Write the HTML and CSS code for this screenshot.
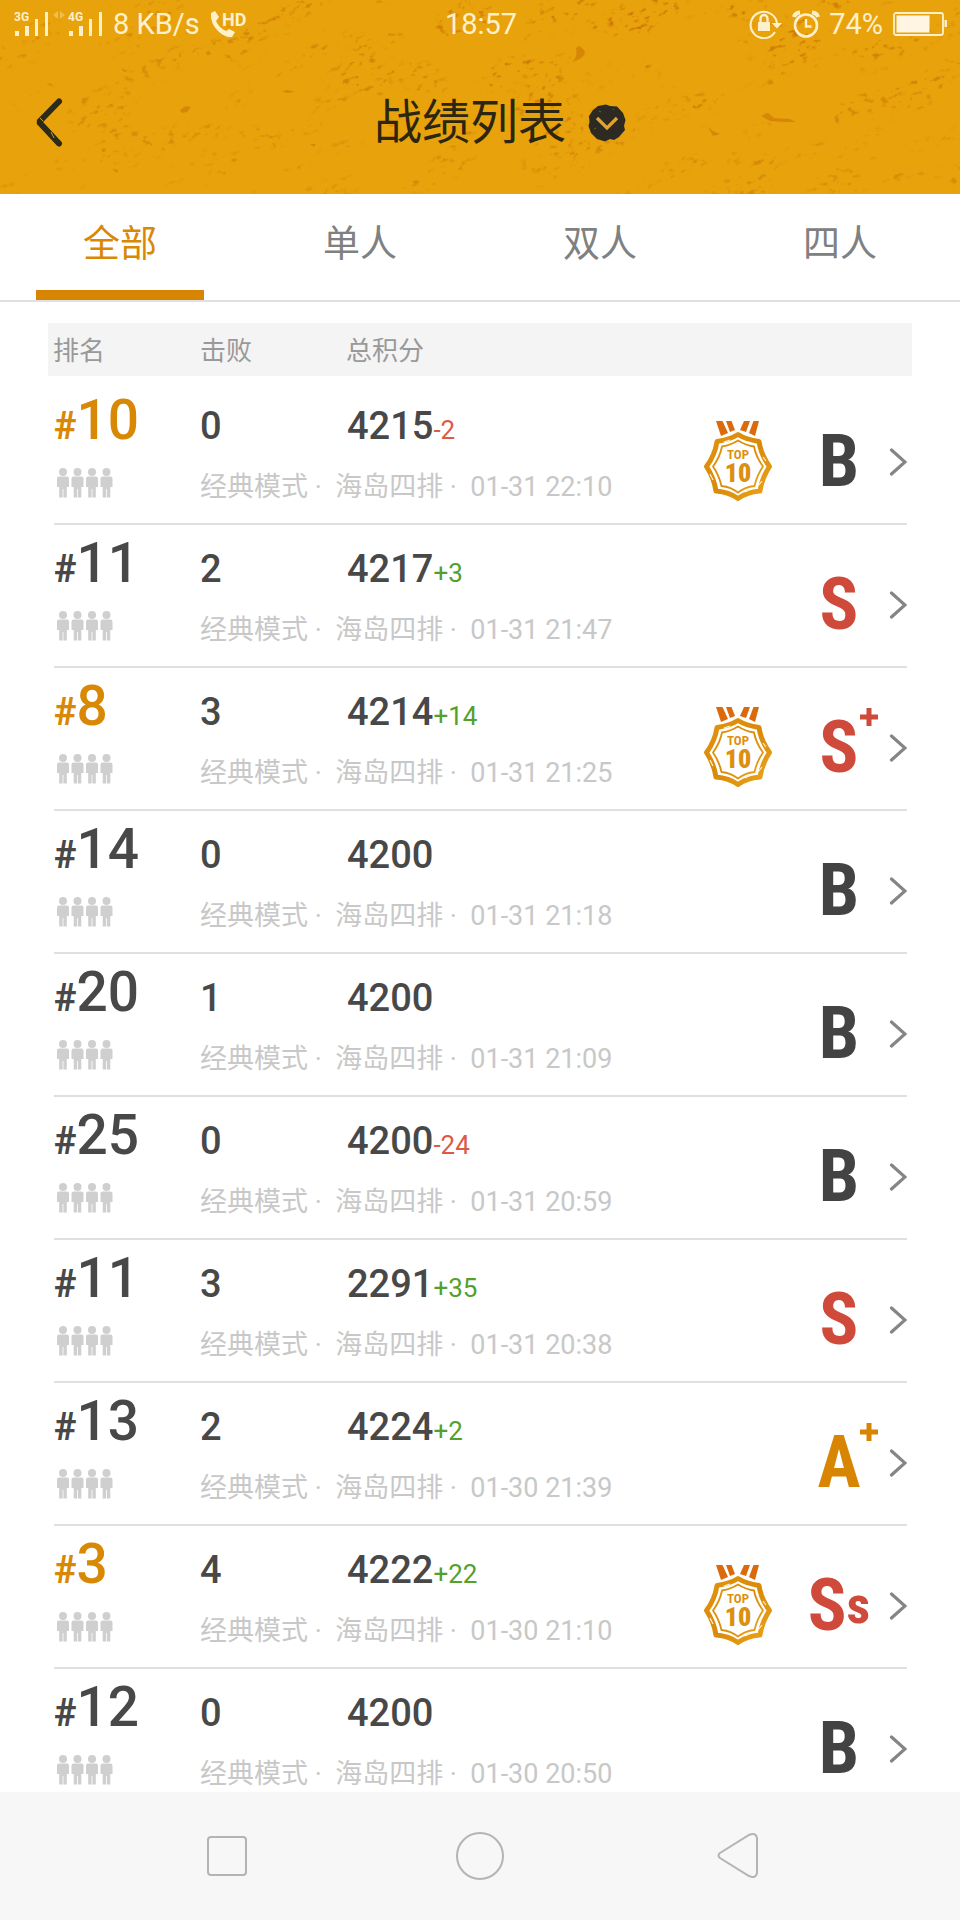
FILE: index.html
```html
<!DOCTYPE html>
<html lang="zh-CN">
<head>
<meta charset="utf-8">
<meta name="viewport" content="width=device-width, initial-scale=1">
<title>战绩列表</title>
<link rel="stylesheet" href="styles.css">
</head>
<body>
<svg class="defs" aria-hidden="true">
  <defs>
    <symbol id="squad" viewBox="0 0 56 30">
      <g id="person" fill="#cfcfcf"><circle cx="6" cy="4" r="4"/><path d="M2 8.500H10Q12 8.500 12 10.500V19H9.800V29.500H6.400V21H5.600V29.500H2.200V19H0V10.500Q0 8.500 2 8.500Z"/></g>
      <use href="#person" x="14.500"/><use href="#person" x="29"/><use href="#person" x="43.500"/>
    </symbol>
    <symbol id="next" viewBox="0 0 18 30"><path d="M2.500 3L16 15L2.500 27" fill="none" stroke="#858585" stroke-width="3.200" stroke-linecap="round"/></symbol>
    <linearGradient id="gold" x1="0" y1="0" x2="1" y2="1"><stop offset="0" stop-color="#e2940f"/><stop offset=".5" stop-color="#d98a08"/><stop offset="1" stop-color="#eba51d"/></linearGradient>
    <symbol id="medal" viewBox="0 0 70 82">
      <g fill="#db6a0c"><path d="M13 0H19.500L25 12L18 15Z"/><path d="M23 0H28.500L32 9L27 11Z"/><path d="M41 0H47L43 11L37 9Z"/><path d="M50.500 0H56L52 15L46 12Z"/></g>
      <path d="M35 13.500Q43 18.500 56 20.500Q58 34 66.500 45.500Q59 57 57 70Q44 71 35 77.500Q26 71 13 70Q11 57 3.500 45.500Q12 34 14 20.500Q27 18.500 35 13.500Z" fill="none" stroke="url(#gold)" stroke-width="5" stroke-linejoin="round"/>
      <path d="M35 19.500Q42 24 51 25.500Q53 36 60 45.500Q54 54 51.500 65Q42 66 35 71.500Q28 66 18.500 65Q16 54 10 45.500Q17 36 19 25.500Q28 24 35 19.500Z" fill="none" stroke="url(#gold)" stroke-width="1.800" stroke-linejoin="round"/>
      <path d="M7 53L10 59M59 60L55 65M21 21L27 19M60 36L63 40M42 71L46 69" stroke="#fff2cf" stroke-width="1.200"/>
      <text class="medal-top" x="35" y="38" text-anchor="middle">TOP</text>
      <text class="medal-ten" x="35" y="61" text-anchor="middle">10</text>
    </symbol>
    <symbol id="plus" viewBox="0 0 20 20"><path d="M7.500 1H12.500V7.500H19V12.500H12.500V19H7.500V12.500H1V7.500H7.500Z" fill="currentColor"/></symbol>
    <filter id="grain" x="0" y="0" width="1" height="1" color-interpolation-filters="sRGB">
      <feTurbulence type="fractalNoise" baseFrequency=".12 .2" numOctaves="4" seed="8" result="fine"/>
      <feColorMatrix in="fine" values="0 0 0 0 .8  0 0 0 0 .46  0 0 0 0 .02  8 0 0 0 -4.900" result="specks"/>
      <feTurbulence type="fractalNoise" baseFrequency=".012 .03" numOctaves="3" seed="4"/>
      <feColorMatrix values="0 0 0 0 0  0 0 0 0 0  0 0 0 0 0  0 8 0 0 -4" result="patches"/>
      <feComposite in="specks" in2="patches" operator="in"/>
    </filter>
    <radialGradient id="worn" cx=".68" cy=".15" r=".6"><stop offset="0" stop-color="#fff"/><stop offset=".4" stop-color="#ccc"/><stop offset="1" stop-color="#888"/></radialGradient>
    <mask id="wear"><rect width="960" height="200" fill="url(#worn)"/></mask>
  </defs>
</svg>

<header class="hero">
  <svg class="texture" viewBox="0 0 960 194" preserveAspectRatio="xMidYMid slice" aria-hidden="true">
    <g mask="url(#wear)"><rect x="-100" y="-400" width="1300" height="1000" transform="rotate(-22 480 97)" filter="url(#grain)"/></g>
    <g fill="#d07c06" opacity=".7"><path d="M180 110L186 106L191 107L187 112L182 113ZM282 91L288 90L295 92L287 93ZM112 169L118 170L117 173ZM572 62Q578 57 576 48Q580 43 585 52Q585 58 572 62ZM310 144L316 144L314 147ZM121 68L127 71L124 72ZM708 127L713 131L720 134L713 136ZM761 116L768 113L774 118L790 119L796 122L785 122L770 121Z"/></g>
  </svg>
  <div class="status">
    <div class="status-side">
      <svg width="90" height="30" viewBox="0 0 90 30" fill="#fff0cc" aria-label="3G 4G">
        <text class="net" x="0" y="12">3G</text><path d="M1 22H5V27H1ZM11 17H15V27H11ZM21 10H24V27H21ZM31 3H34V27H31Z"/>
        <path opacity=".35" d="M44 2V10L39 6ZM46 2V10L51 6Z"/>
        <text class="net" x="54" y="12">4G</text><path d="M55 22H59V27H55ZM65 17H69V27H65ZM75 10H78V27H75ZM85 3H88V27H85Z"/>
      </svg>
      <span>8 KB/s</span>
      <svg width="38" height="30" viewBox="0 0 38 30" fill="#fff0cc" aria-label="HD">
        <path d="M2 4L6 2L10 8L7 12Q10 19 17 22L20 20L26 23L23 28Q16 29 9 22Q1 14 2 4Z"/>
        <text class="hd" x="13" y="17">HD</text>
      </svg>
    </div>
    <time>18:57</time>
    <div class="status-side status-right">
      <svg width="34" height="30" viewBox="0 0 34 30" aria-hidden="true">
        <path d="M26 23A13.200 13.200 0 1 1 28 15" fill="none" stroke="#fff0cc" stroke-width="2"/><path d="M22.500 14H33L28 19.500Z" fill="#fff0cc"/>
        <path d="M9 13H21V22H9Z" fill="#fff0cc"/><path d="M11.500 13V9.500A3.500 3.500 0 0 1 18.500 9.500V13" fill="none" stroke="#fff0cc" stroke-width="2.400"/>
      </svg>
      <svg width="28" height="30" viewBox="0 0 28 30" fill="none" stroke="#fff0cc" aria-hidden="true">
        <circle cx="14" cy="16.500" r="11" stroke-width="2.600"/><path d="M14 10V17.500H19.500" stroke-width="2.400"/><path d="M2 8Q3 4 8 3.500M26 8Q25 4 20 3.500" stroke-width="4"/>
      </svg>
      <span>74%</span>
      <svg width="56" height="30" viewBox="0 0 56 30" aria-hidden="true">
        <rect x="2" y="4" width="49" height="22" rx="2" fill="none" stroke="#fff0cc" stroke-width="1.800"/><rect x="4.500" y="6.500" width="33" height="17" fill="#fff5e2"/><rect x="52.500" y="11" width="2.500" height="7" fill="#fff0cc"/>
      </svg>
    </div>
  </div>
  <div class="titlebar">
    <button class="back" aria-label="返回">
      <svg width="30" height="50" viewBox="0 0 30 50"><path d="M25 3.500L5 24L25 45.500" fill="none" stroke="#2c2a1b" stroke-width="6" stroke-linecap="round" stroke-linejoin="bevel"/><path d="M6 20L9 23M17 34L20 40" stroke="#d89a18"/></svg>
    </button>
    <h1>战绩列表</h1>
    <button class="filter" aria-label="筛选">
      <svg width="38" height="38" viewBox="0 0 38 38"><path d="M10 2L18 .500L22 2L29 2.500L35 9L37.500 16L36 22L37 26L31 33L26 36L22 35L17 37.500L9 35L3 29L.500 22L1.500 18L1 12L5 6Z" fill="#2c2a22"/><path d="M9 14L19 24L29 14" fill="none" stroke="#e2a42c" stroke-width="3.200"/><path d="M11 7L13 8M6 25L8 24M25 6L26 5" stroke="#85601a"/></svg>
    </button>
  </div>
</header>

<nav class="tabs">
  <button class="tab active">全部</button>
  <button class="tab">单人</button>
  <button class="tab">双人</button>
  <button class="tab">四人</button>
</nav>

<main class="content">
  <table class="records">
    <thead><tr><th>排名</th><th>击败</th><th>总积分</th></tr></thead>
    <tbody>
      <tr>
        <td class="rank top"><small>#</small>10</td><td class="kills">0</td><td class="score">4215<span class="loss">-2</span></td>
        <td class="team"><svg><use href="#squad"/></svg></td><td class="meta">经典模式 ·&nbsp; 海岛四排 ·&nbsp; 01-31 22:10</td>
        <td class="award"><svg><use href="#medal"/></svg></td><td class="grade b"><b>B</b></td>
        <td class="more"><a href="#" aria-label="详情"><svg><use href="#next"/></svg></a></td>
      </tr>
      <tr>
        <td class="rank"><small>#</small>11</td><td class="kills">2</td><td class="score">4217<span class="gain">+3</span></td>
        <td class="team"><svg><use href="#squad"/></svg></td><td class="meta">经典模式 ·&nbsp; 海岛四排 ·&nbsp; 01-31 21:47</td>
        <td class="award"></td><td class="grade s"><b>S</b></td>
        <td class="more"><a href="#" aria-label="详情"><svg><use href="#next"/></svg></a></td>
      </tr>
      <tr>
        <td class="rank top"><small>#</small>8</td><td class="kills">3</td><td class="score">4214<span class="gain">+14</span></td>
        <td class="team"><svg><use href="#squad"/></svg></td><td class="meta">经典模式 ·&nbsp; 海岛四排 ·&nbsp; 01-31 21:25</td>
        <td class="award"><svg><use href="#medal"/></svg></td><td class="grade s"><b>S</b><svg class="plus"><use href="#plus"/></svg></td>
        <td class="more"><a href="#" aria-label="详情"><svg><use href="#next"/></svg></a></td>
      </tr>
      <tr>
        <td class="rank"><small>#</small>14</td><td class="kills">0</td><td class="score">4200</td>
        <td class="team"><svg><use href="#squad"/></svg></td><td class="meta">经典模式 ·&nbsp; 海岛四排 ·&nbsp; 01-31 21:18</td>
        <td class="award"></td><td class="grade b"><b>B</b></td>
        <td class="more"><a href="#" aria-label="详情"><svg><use href="#next"/></svg></a></td>
      </tr>
      <tr>
        <td class="rank"><small>#</small>20</td><td class="kills">1</td><td class="score">4200</td>
        <td class="team"><svg><use href="#squad"/></svg></td><td class="meta">经典模式 ·&nbsp; 海岛四排 ·&nbsp; 01-31 21:09</td>
        <td class="award"></td><td class="grade b"><b>B</b></td>
        <td class="more"><a href="#" aria-label="详情"><svg><use href="#next"/></svg></a></td>
      </tr>
      <tr>
        <td class="rank"><small>#</small>25</td><td class="kills">0</td><td class="score">4200<span class="loss">-24</span></td>
        <td class="team"><svg><use href="#squad"/></svg></td><td class="meta">经典模式 ·&nbsp; 海岛四排 ·&nbsp; 01-31 20:59</td>
        <td class="award"></td><td class="grade b"><b>B</b></td>
        <td class="more"><a href="#" aria-label="详情"><svg><use href="#next"/></svg></a></td>
      </tr>
      <tr>
        <td class="rank"><small>#</small>11</td><td class="kills">3</td><td class="score">2291<span class="gain">+35</span></td>
        <td class="team"><svg><use href="#squad"/></svg></td><td class="meta">经典模式 ·&nbsp; 海岛四排 ·&nbsp; 01-31 20:38</td>
        <td class="award"></td><td class="grade s"><b>S</b></td>
        <td class="more"><a href="#" aria-label="详情"><svg><use href="#next"/></svg></a></td>
      </tr>
      <tr>
        <td class="rank"><small>#</small>13</td><td class="kills">2</td><td class="score">4224<span class="gain">+2</span></td>
        <td class="team"><svg><use href="#squad"/></svg></td><td class="meta">经典模式 ·&nbsp; 海岛四排 ·&nbsp; 01-30 21:39</td>
        <td class="award"></td><td class="grade a"><b>A</b><svg class="plus"><use href="#plus"/></svg></td>
        <td class="more"><a href="#" aria-label="详情"><svg><use href="#next"/></svg></a></td>
      </tr>
      <tr>
        <td class="rank top"><small>#</small>3</td><td class="kills">4</td><td class="score">4222<span class="gain">+22</span></td>
        <td class="team"><svg><use href="#squad"/></svg></td><td class="meta">经典模式 ·&nbsp; 海岛四排 ·&nbsp; 01-30 21:10</td>
        <td class="award"><svg><use href="#medal"/></svg></td><td class="grade s"><b>S</b><b class="minor">s</b></td>
        <td class="more"><a href="#" aria-label="详情"><svg><use href="#next"/></svg></a></td>
      </tr>
      <tr>
        <td class="rank"><small>#</small>12</td><td class="kills">0</td><td class="score">4200</td>
        <td class="team"><svg><use href="#squad"/></svg></td><td class="meta">经典模式 ·&nbsp; 海岛四排 ·&nbsp; 01-30 20:50</td>
        <td class="award"></td><td class="grade b"><b>B</b></td>
        <td class="more"><a href="#" aria-label="详情"><svg><use href="#next"/></svg></a></td>
      </tr>
    </tbody>
  </table>
</main>

<footer class="system">
  <button aria-label="最近任务"><svg width="48" height="48" viewBox="0 0 48 48"><rect x="7" y="5" width="38" height="38" rx="3"/></svg></button>
  <button aria-label="主屏幕"><svg width="48" height="48" viewBox="0 0 48 48"><circle cx="24" cy="24" r="23"/></svg></button>
  <button aria-label="返回"><svg width="48" height="48" viewBox="0 0 48 48"><path d="M9 21L38 3Q45 0 46 6V41Q45 47 38 44L9 26Q6 23.500 9 21Z"/></svg></button>
</footer>
</body>
</html>
```
FILE: styles.css
```css
* { box-sizing: border-box; }
body {
  margin: 0;
  height: 100vh;
  display: flex;
  flex-direction: column;
  background: #fff;
  color: #484848;
  font-family: Roboto, "Noto Sans CJK SC", sans-serif;
}
button { padding: 0; border: 0; background: none; font: inherit; color: inherit; }
svg { display: block; flex: none; }
.defs { position: absolute; width: 0; height: 0; }

.hero {
  position: relative;
  flex: none;
  background: #e8a20b;
  overflow: hidden;
}
.texture { position: absolute; inset: 0; width: 100%; height: 100%; }
.status {
  position: relative;
  display: grid;
  grid-template-columns: 1fr auto 1fr;
  align-items: center;
  padding: 0 12px 0 14px;
  color: #fff0cc;
  font-size: 29px;
  line-height: 48px;
}
.status-side { display: flex; align-items: center; gap: 9px; }
.status-right { justify-content: flex-end; }
.net { font: 700 12px Roboto, sans-serif; }
.hd { font: 700 18px Roboto, sans-serif; }
.titlebar {
  position: relative;
  display: grid;
  grid-template-columns: 1fr auto 1fr;
  align-items: center;
  padding: 42px 20px 38px 0;
  color: #2c2611;
}
.back { justify-self: start; padding-left: 34px; }
h1 { margin: 0; font-size: 48px; line-height: 66px; font-weight: 400; }
.filter { justify-self: start; margin-left: 22px; }

.tabs {
  flex: none;
  display: grid;
  grid-template-columns: repeat(4, 1fr);
  height: 108px;
  border-bottom: 2px solid #e0e0e0;
}
.tab {
  position: relative;
  padding-bottom: 4px;
  color: #808080;
  font-size: 37px;
  line-height: 48px;
}
.active { color: #d98806; }
.active::after {
  content: "";
  position: absolute;
  left: 15%;
  right: 15%;
  bottom: 0;
  height: 10px;
  background: #d88503;
}

.content {
  flex: 1;
  min-height: 0;
  padding: 21px 48px 0;
  overflow-y: auto;
  scrollbar-width: none;
}
.records, tbody, thead { display: block; }
th, td { padding: 0; text-align: left; }
thead tr {
  display: grid;
  grid-template-columns: 147px 146px 1fr;
  padding: 3px 5px 0;
  background: #f4f4f4;
}
th { color: #999; font-size: 26px; line-height: 50px; font-weight: 400; }
tbody { padding: 6px 5px 0 6px; }
tbody tr {
  display: grid;
  grid-template-columns: 146px 147px 1fr 70px 100px 34px;
  grid-template-rows: 64px 38px;
  row-gap: 16px;
  padding: 6px 0 17px;
  border-bottom: 2px solid #e0e0e0;
}
.rank, .kills, .score { grid-row: 1; align-self: baseline; font-size: 38px; font-weight: 500; line-height: 64px; }
.rank { font-size: 55px; }
.rank small { font-size: 38px; font-weight: 700; }
.top { color: #d98806; }
.score span { font-size: 26px; font-weight: 400; }
.loss { color: #dc5a46; }
.gain { color: #54a02c; }
.team { grid-area: 2 / 1; padding-left: 3px; }
.team svg { width: 56px; height: 30px; }
.meta {
  grid-area: 2 / 2 / 3 / 4;
  color: #c8c8c8;
  font-size: 27px;
  line-height: 38px;
  white-space: nowrap;
}
.award, .grade, .more { align-self: center; padding-top: 30px; }
.award { grid-area: 1 / 4 / 3 / 5; }
.award svg { width: 70px; height: 82px; }
.grade {
  grid-area: 1 / 5 / 3 / 6;
  position: relative;
  display: flex;
  justify-content: center;
  align-items: center;
  margin-left: 16px;
  margin-right: -16px;
}
.grade b { font: 700 72px/64px "Roboto Condensed", "Liberation Sans Narrow", "Liberation Sans", sans-serif; }
.grade .minor { font-size: 52px; }
.plus { position: absolute; left: 70px; top: 21px; width: 20px; height: 20px; }
.b { color: #434343; }
.s { color: #d04a3b; }
.a { color: #d88503; }
.more { grid-area: 1 / 6 / 3 / 7; justify-self: end; }
.more svg { width: 18px; height: 30px; }
.medal-top { font: 700 13px "Roboto Condensed", "Liberation Sans Narrow", sans-serif; fill: #dc900e; }
.medal-ten { font: 900 26px "Roboto Condensed", "Liberation Sans Narrow", sans-serif; fill: #dc900e; }

.system {
  flex: none;
  display: flex;
  justify-content: center;
  align-items: center;
  gap: 207px;
  height: 128px;
  background: #f7f7f7;
}
.system svg { fill: none; stroke: #b4b4b4; stroke-width: 2; }
```
